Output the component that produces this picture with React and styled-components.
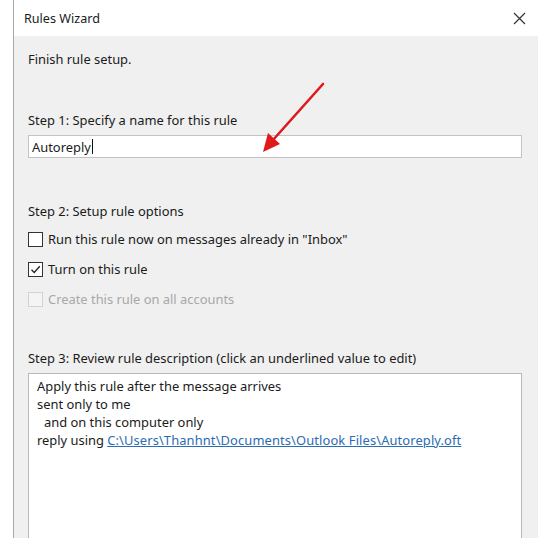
import React from 'react'
import styled, { createGlobalStyle } from 'styled-components'

const GlobalStyle = createGlobalStyle`
  html, body {
    margin: 0;
    padding: 0;
    background: #ffffff;
    overflow: hidden;
  }
  body {
    font-family: "Noto Sans", "Open Sans", sans-serif;
    color: #1b1b1b;
  }
`

const Page = styled.div`
  height: 538px;
  padding-left: 13px;
  position: relative;
  overflow: hidden;
`

const Window = styled.div`
  height: 100%;
  border-left: 1px solid #a8a8a8;
  display: flex;
  flex-direction: column;
`

const TitleBar = styled.div`
  height: 36px;
  background: #ffffff;
  display: flex;
  align-items: center;
  justify-content: space-between;
  padding: 0 11px 0 10px;
  font-size: 12.6px;
  flex-shrink: 0;
`

const CloseButton = styled.div`
  width: 16px;
  height: 16px;
  display: flex;
  align-items: center;
  justify-content: center;
`

const Body = styled.div`
  flex: 1;
  min-height: 0;
  background: #f0f0f0;
  padding: 13px 16px 0 14px;
  font-size: 12.9px;
  display: flex;
  flex-direction: column;
`

const Intro = styled.div`
  height: 20px;
  line-height: 20px;
`

const Label = styled.div`
  line-height: 18px;
  margin-top: ${p => p.$top}px;
`

const TextInput = styled.div`
  margin-top: 6px;
  height: 21px;
  border: 1px solid #c3c3c3;
  background: #ffffff;
  display: flex;
  align-items: center;
  padding-left: 3px;
`

const Caret = styled.span`
  display: inline-block;
  width: 1px;
  height: 15px;
  background: #111;
  margin-left: 1px;
`

const Option = styled.div`
  display: flex;
  align-items: center;
  height: 16px;
  margin-top: ${p => p.$top}px;
  color: ${p => (p.$disabled ? '#a8a8a8' : '#1b1b1b')};
`

const Box = styled.div`
  width: 13px;
  height: 13px;
  border: 1px solid ${p => (p.$disabled ? '#d2d2d2' : '#333333')};
  background: ${p => (p.$disabled ? '#f4f4f4' : '#ffffff')};
  margin-right: 5px;
  display: flex;
  align-items: center;
  justify-content: center;
  flex-shrink: 0;
`

const Description = styled.div`
  margin-top: 6px;
  flex: 1;
  border: 1px solid #b9b9b9;
  border-bottom: none;
  background: #ffffff;
  padding: 3px 8px;
  line-height: 18px;
`

const Line = styled.div`
  padding-left: ${p => p.$indent || 0}px;
  white-space: pre;
`

const Link = styled.span`
  color: #2b6cb3;
  text-decoration: underline;
  letter-spacing: 0.12px;
`

const Arrow = styled.svg`
  position: absolute;
  left: 255px;
  top: 78px;
`

const Check = () => (
  <svg width="11" height="11" viewBox="0 0 11 11">
    <path d="M1.5 5.8 L4.2 8.5 L9.8 2.2" fill="none" stroke="#222" strokeWidth="1.3" />
  </svg>
)

export default function App() {
  return (
    <Page>
      <GlobalStyle />
      <Window>
        <TitleBar>
          <span>Rules Wizard</span>
          <CloseButton>
            <svg width="13" height="13" viewBox="0 0 13 13">
              <path d="M1 1 L12 12 M12 1 L1 12" stroke="#333" strokeWidth="1.2" />
            </svg>
          </CloseButton>
        </TitleBar>
        <Body>
          <Intro>Finish rule setup.</Intro>
          <Label $top={42}>Step 1: Specify a name for this rule</Label>
          <TextInput>
            Autoreply<Caret />
          </TextInput>
          <Label $top={44}>Step 2: Setup rule options</Label>
          <Option $top={11}>
            <Box />
            Run this rule now on messages already in "Inbox"
          </Option>
          <Option $top={14}>
            <Box>
              <Check />
            </Box>
            Turn on this rule
          </Option>
          <Option $top={14} $disabled>
            <Box $disabled />
            Create this rule on all accounts
          </Option>
          <Label $top={42}>Step 3: Review rule description (click an underlined value to edit)</Label>
          <Description>
            <Line>Apply this rule after the message arrives</Line>
            <Line>sent only to me</Line>
            <Line $indent={7}>and on this computer only</Line>
            <Line>
              reply using <Link>C:\Users\Thanhnt\Documents\Outlook Files\Autoreply.oft</Link>
            </Line>
          </Description>
        </Body>
      </Window>
      <Arrow width="80" height="80" viewBox="0 0 80 80">
        <line x1="68" y1="6" x2="18" y2="62" stroke="#e0191b" strokeWidth="2.6" strokeLinecap="round" />
        <polygon points="8,74 13,55 25,66" fill="#e0191b" />
      </Arrow>
    </Page>
  )
}
